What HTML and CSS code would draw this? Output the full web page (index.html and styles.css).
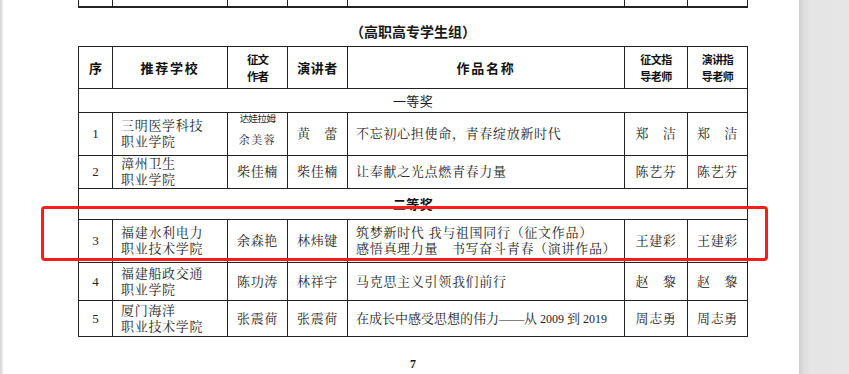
FILE: index.html
```html
<!DOCTYPE html>
<html lang="zh-CN">
<head>
<meta charset="utf-8">
<title>高职高专学生组</title>
<link rel="stylesheet" href="styles.css">
</head>
<body>
<div class="viewer">
  <div class="gutter"></div>
  <div class="page">
    <table class="prev">
      <colgroup>
        <col class="c1"><col class="c2"><col class="c3"><col class="c4"><col class="c5"><col class="c6"><col class="c7">
      </colgroup>
      <tr><td></td><td></td><td></td><td></td><td></td><td></td><td></td></tr>
    </table>

    <div class="title">（高职高专学生组）</div>

    <table class="awards">
      <colgroup>
        <col class="c1"><col class="c2"><col class="c3"><col class="c4"><col class="c5"><col class="c6"><col class="c7">
      </colgroup>
      <tr class="head">
        <th>序</th>
        <th class="wide">推荐学校</th>
        <th class="narrow">征文<br>作者</th>
        <th class="mid">演讲者</th>
        <th class="wide">作品名称</th>
        <th class="narrow small">征文指<br>导老师</th>
        <th class="narrow small">演讲指<br>导老师</th>
      </tr>
      <tr class="sec r24"><td colspan="7">一等奖</td></tr>
      <tr class="r43">
        <td class="num">1</td>
        <td class="left">三明医学科技<br>职业学院</td>
        <td class="pair"><div class="pairbox"><span class="tiny">达娃拉姆</span><span class="sm">余美蓉</span></div></td>
        <td>黄　蕾</td>
        <td class="left">不忘初心担使命，青春绽放新时代</td>
        <td>郑　洁</td>
        <td>郑　洁</td>
      </tr>
      <tr class="r33">
        <td class="num">2</td>
        <td class="left">漳州卫生<br>职业学院</td>
        <td>柴佳楠</td>
        <td>柴佳楠</td>
        <td class="left">让奉献之光点燃青春力量</td>
        <td>陈艺芬</td>
        <td>陈艺芬</td>
      </tr>
      <tr class="sec second r31"><td colspan="7">二等奖</td></tr>
      <tr class="r43">
        <td class="num">3</td>
        <td class="left">福建水利电力<br>职业技术学院</td>
        <td>余森艳</td>
        <td>林炜键</td>
        <td class="left">筑梦新时代 我与祖国同行（征文作品）<br>感悟真理力量　书写奋斗青春（演讲作品）</td>
        <td>王建彩</td>
        <td>王建彩</td>
      </tr>
      <tr class="r38">
        <td class="num">4</td>
        <td class="left">福建船政交通<br>职业学院</td>
        <td>陈功涛</td>
        <td>林祥宇</td>
        <td class="left">马克思主义引领我们前行</td>
        <td>赵　黎</td>
        <td>赵　黎</td>
      </tr>
      <tr class="r36">
        <td class="num">5</td>
        <td class="left">厦门海洋<br>职业技术学院</td>
        <td>张震荷</td>
        <td>张震荷</td>
        <td class="left tight">在成长中感受思想的伟力<span class="dash">——</span>从<span class="latin"> 2009 </span>到<span class="latin"> 2019</span></td>
        <td>周志勇</td>
        <td>周志勇</td>
      </tr>
    </table>

    <div class="pageno">7</div>

    <div class="mark"></div>
  </div>
  <div class="side"></div>
</div>
</body>
</html>
```

FILE: styles.css
```css
html, body {
  margin: 0;
  padding: 0;
  background: #ffffff;
}

body {
  width: 849px;
  height: 374px;
  overflow: hidden;
  color: #252525;
  font-family: "Liberation Serif", "Noto Serif CJK SC", "Noto Sans CJK SC", serif;
}

.viewer {
  display: flex;
  height: 374px;
}

.gutter {
  width: 3px;
  background: linear-gradient(to right, #d6d6d6, #ececec);
}

.page {
  position: relative;
  width: 796px;
  background: #ffffff;
  padding-left: 75px;
  box-sizing: border-box;
}

.side {
  width: 50px;
  background: linear-gradient(to right, #cfcfcf 0, #dedede 5px, #e5e5e5 12px, #e6e6e6 100%);
}

/* column widths shared by both tables */
.c1 { width: 34px; }
.c2 { width: 115px; }
.c3 { width: 60px; }
.c4 { width: 60px; }
.c5 { width: 277px; }
.c6 { width: 63px; }
.c7 { width: 60px; }

table {
  border-collapse: collapse;
  table-layout: fixed;
  width: 670px;
}

.prev td {
  height: 6px;
  padding: 0;
  border-left: 1px solid #222;
  border-right: 1px solid #222;
  border-bottom: 2px solid #222;
}

.title {
  height: 38px;
  box-sizing: border-box;
  padding-top: 15px;
  width: 670px;
  text-align: center;
  font-family: "Noto Sans CJK SC", sans-serif;
  font-weight: 700;
  font-size: 14px;
  letter-spacing: 0;
  line-height: 16px;
  color: #1a1a1a;
}

.awards td,
.awards th {
  border: 1px solid #222;
  padding: 0;
  text-align: center;
  vertical-align: middle;
  font-size: 13px;
  line-height: 16px;
  letter-spacing: 0.7px;
  white-space: nowrap;
  overflow: visible;
}

.awards .head th {
  height: 41px;
  font-family: "Noto Sans CJK SC", sans-serif;
  font-weight: 700;
  font-size: 13px;
  color: #111;
  letter-spacing: 0;
}

.awards .head th.wide { letter-spacing: 1.8px; }
.awards .head th.mid { letter-spacing: 0.5px; }
.awards .head th.narrow {
  font-size: 11.5px;
  line-height: 17px;
  letter-spacing: -1px;
}
.awards .head th.small {
  font-size: 11px;
  letter-spacing: -0.5px;
}

.r24 td { height: 23px; }
.r31 td { height: 30px; }
.r33 td { height: 32px; }
.r36 td { height: 35px; }
.r38 td { height: 37px; }
.r43 td { height: 42px; }

.awards .sec td {
  font-family: "Noto Sans CJK SC", sans-serif;
  font-size: 13px;
  letter-spacing: 0.3px;
  color: #1a1a1a;
}

.awards .sec.second td {
  font-weight: 700;
  color: #111;
}

.awards td.left {
  text-align: left;
  padding-left: 8px;
}

.awards td.tight {
  letter-spacing: 0;
}

.dash {
  letter-spacing: -0.5px;
}

.latin {
  font-size: 12px;
  letter-spacing: 0;
}

.awards td.num {
  font-size: 13px;
  letter-spacing: 0;
}

.pairbox {
  margin-top: -9px;
  margin-bottom: 1px;
}

.tiny {
  display: block;
  font-family: "Noto Sans CJK SC", sans-serif;
  font-size: 9.5px;
  letter-spacing: -0.6px;
  line-height: 22px;
}

.sm {
  display: block;
  font-size: 11px;
  letter-spacing: 1.5px;
  line-height: 22px;
}

.pageno {
  width: 670px;
  margin-top: 20px;
  text-align: center;
  font-family: "Liberation Serif", serif;
  font-weight: 700;
  font-size: 12px;
  line-height: 14px;
  color: #111;
}

.mark {
  position: absolute;
  left: 38px;
  top: 206px;
  width: 727px;
  height: 55px;
  box-sizing: border-box;
  border: 3px solid #fd1d18;
  border-radius: 4px;
}
```
